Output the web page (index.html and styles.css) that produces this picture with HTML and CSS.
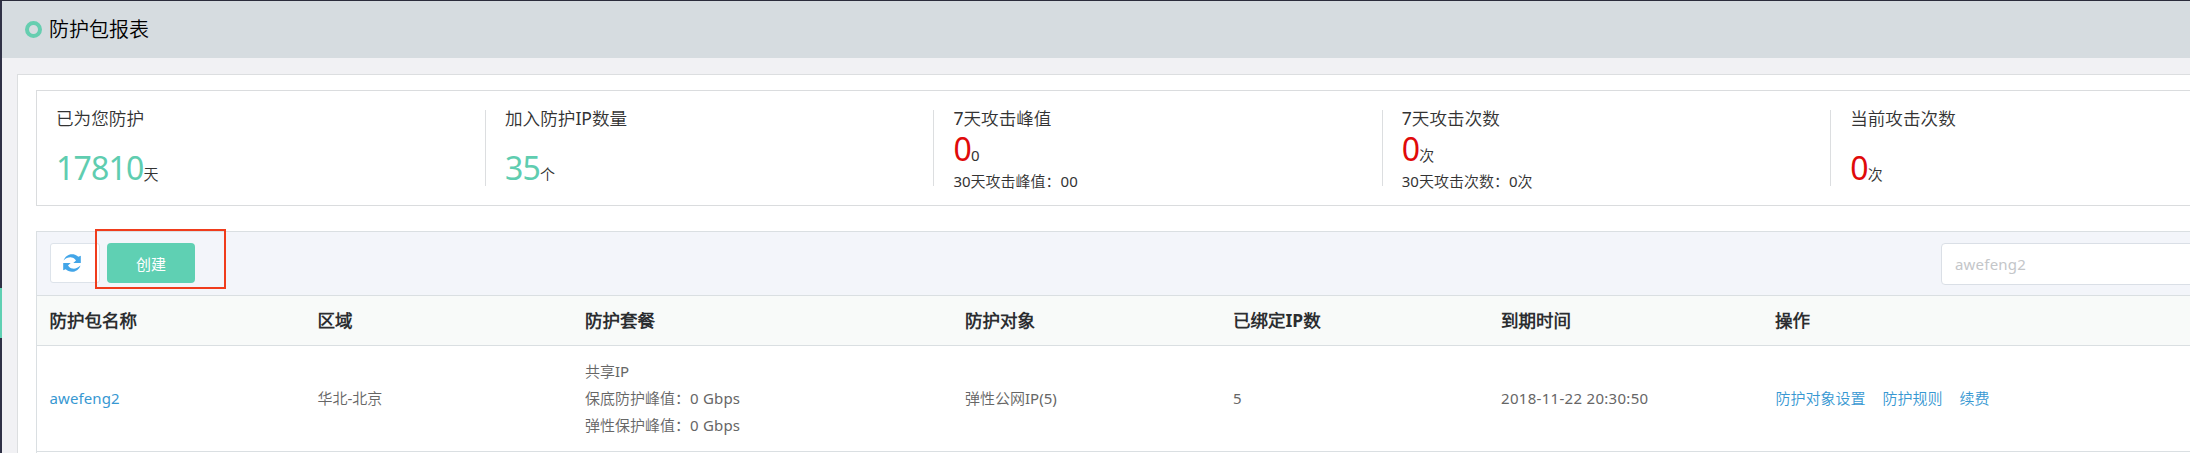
FILE: index.html
```
<!DOCTYPE html>
<html lang="zh-CN">
<head>
<meta charset="utf-8">
<title>防护包报表</title>
<link rel="stylesheet" href="styles.css">
</head>
<body>
<div class="app">
  <aside class="rail"><span class="rail-active"></span></aside>
  <div class="page">
    <header class="head"><span class="ring"></span><h1 class="title">防护包报表</h1></header>
    <main class="panel">
      <section class="stats">
        <div class="stat"><div class="label">已为您防护</div><div class="value tall"><b class="num green">17810</b>天</div></div>
        <div class="stat"><div class="label">加入防护IP数量</div><div class="value tall"><b class="num green">35</b>个</div></div>
        <div class="stat"><div class="label">7天攻击峰值</div><div class="value"><b class="num red">0</b>0</div><div class="sub">30天攻击峰值：00</div></div>
        <div class="stat"><div class="label">7天攻击次数</div><div class="value"><b class="num red">0</b>次</div><div class="sub">30天攻击次数：0次</div></div>
        <div class="stat"><div class="label">当前攻击次数</div><div class="value tall"><b class="num red">0</b>次</div></div>
      </section>
      <section class="list">
        <div class="toolbar">
          <button class="refresh" aria-label="刷新">
            <svg width="18" height="18" viewBox="0 0 18 18" fill="#42a5e8"><path d="M.5 6.500C2 2.500 5.200.2 9 .2c2.500 0 4.700.9 6.300 2.500L17.800 1.700v7.300H10.300l2.700-2.600C12 4.800 10.700 3.700 8.500 3.400 5.500 3 3 4.300.5 6.500z"/><path d="M17.500 11.500c-1.500 4-4.700 6.300-8.500 6.300-2.500 0-4.700-.9-6.300-2.500L.2 16.300V9h7.500L5 11.600c1 1.600 2.300 2.700 4.500 3 3 .4 5.500-.9 8-3.100z"/></svg>
          </button>
          <button class="create">创建</button>
          <span class="mark"></span>
          <input class="search" placeholder="awefeng2">
        </div>
        <div class="row thead">
          <span>防护包名称</span><span>区域</span><span>防护套餐</span><span>防护对象</span><span>已绑定IP数</span><span>到期时间</span><span>操作</span>
        </div>
        <div class="row item">
          <span><a class="link name">awefeng2</a></span><span>华北-北京</span>
          <span>共享IP<br>保底防护峰值：<span class="rate">0 Gbps</span><br>弹性保护峰值：<span class="rate">0 Gbps</span></span>
          <span>弹性公网IP(5)</span><span>5</span><span class="date">2018-11-22 20:30:50</span>
          <span class="ops"><a class="link">防护对象设置</a><a class="link">防护规则</a><a class="link">续费</a></span>
        </div>
        <div class="row item next"></div>
      </section>
    </main>
  </div>
</div>
</body>
</html>
```

FILE: styles.css
```
* { box-sizing: border-box; }
body { margin: 0; overflow: hidden; background: #f1f1f4; font: 15px "Noto Sans", "Noto Sans CJK SC DemiLight", "Noto Sans CJK SC", sans-serif; color: #333; }
.app { display: flex; height: 453px; overflow: hidden; border-top: 1px solid #2b2c3b; }
.rail { flex: none; width: 2px; padding-top: 287px; background: #2f3146; }
.rail-active { display: block; height: 50px; background: #5fd0b3; }
.page { flex: none; width: 2314px; }
.head { display: flex; align-items: center; gap: 7px; height: 57px; padding: 0 0 0 23px; background: #d6dce0; }
.ring { width: 17px; height: 17px; border: 4px solid #66ceb0; border-radius: 50%; }
.title { margin: 0; padding-top: 1px; font-size: 20px; font-weight: 350; line-height: 28px; color: #000; }
.panel { margin: 16px 0 0 15px; padding: 15px 18px; width: 2281px; height: 500px; background: #fff; border: 1px solid #dcdee0; }
.stats { display: grid; grid-template-columns: 449px repeat(4, 448.4px); width: 2244px; height: 116px; padding: 19px 0; border: 1px solid #dadcde; }
.stat { height: 76px; padding-left: 19px; border-right: 1px solid #dcdee0; }
.label { height: 18px; line-height: 16px; font-size: 17.6px; white-space: nowrap; }
.value { height: 42px; line-height: 42px; }
.value.tall { padding-top: 19px; }
.num { font: 400 32px/42px "Noto Sans", sans-serif; letter-spacing: -.8px; }
.green { color: #5fcdb0; }
.red { color: #e00a0a; }
.sub { height: 22px; line-height: 22px; }
.list { width: 2244px; margin-top: 25px; border: 1px solid #dadfe2; }
.toolbar { position: relative; display: flex; align-items: flex-start; height: 63px; padding: 11px 13px; background: #f3f5fa; }
.refresh { display: flex; align-items: center; width: 50px; height: 40px; padding: 0 0 0 12px; background: #fff; border: 1px solid #dde3ea; border-radius: 3px; }
.create { width: 88px; height: 40px; margin-left: 7px; padding: 0; border: 0; border-radius: 4px; background: #5fd0b3; color: #fff; font: 15px "Noto Sans", "Noto Sans CJK SC", sans-serif; }
.mark { position: absolute; left: 58px; top: -3px; width: 131px; height: 60px; border: 2px solid #f03c1c; }
.search { width: 325px; height: 42px; margin-left: auto; padding: 0 13px; border: 1px solid #dadfe6; border-radius: 4px; font: 15px "Noto Sans", sans-serif; letter-spacing: .2px; }
.search::placeholder { color: #c4c6c9; opacity: 1; }
.row { display: grid; align-items: center; grid-template-columns: 268px 267.5px 380px 268px 268px 274px 1fr; padding-left: 12.5px; border-top: 1px solid #dadfe2; }
.thead { height: 50px; padding-bottom: 2px; background: #f8faf9; font-size: 17.5px; font-weight: 700; color: #2b2d30; }
.item { height: 106px; line-height: 27px; color: #666; }
.link { color: #3798d2; }
.name { letter-spacing: .1px; }
.date { letter-spacing: .3px; }
.rate { letter-spacing: .2px; }
.ops { display: flex; gap: 17px; padding-left: .5px; }
```
